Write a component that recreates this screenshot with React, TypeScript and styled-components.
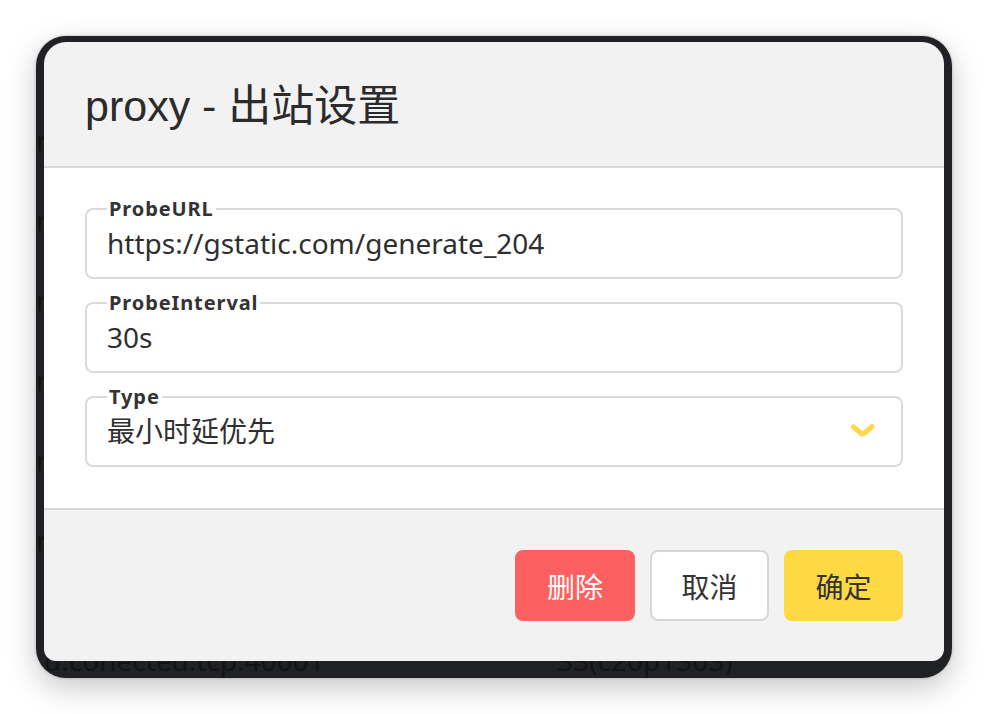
import styled, { createGlobalStyle } from 'styled-components'

const GlobalStyle = createGlobalStyle`
  html, body {
    margin: 0;
    background: #ffffff;
  }
  body {
    font-family: 'Noto Sans', 'Noto Sans CJK SC', sans-serif;
    color: #333;
  }
`

const Page = styled.div`
  width: 988px;
  height: 714px;
  box-sizing: border-box;
  padding: 36px;
`

const Window = styled.div`
  position: relative;
  width: 916px;
  height: 642px;
  border-radius: 30px;
  background: #202124;
  overflow: hidden;
  box-shadow: 0 10px 30px rgba(0, 0, 0, 0.22), 0 0 3px rgba(0, 0, 0, 0.25);
`

// connection list that sits behind the dialog
const BackList = styled.div`
  display: flex;
  flex-direction: column;
  padding-top: 64px;
  color: #121314;
  font-size: 28px;
`

const BackRow = styled.div<{ last?: boolean }>`
  display: grid;
  grid-template-columns: ${p => (p.last ? '513px' : '521px')} auto;
  align-items: center;
  height: ${p => (p.last ? '36px' : '80px')};
  margin-top: ${p => (p.last ? '62px' : '0')};
  padding-left: ${p => (p.last ? '8px' : '0')};
  line-height: 36px;
  white-space: nowrap;
`

const Modal = styled.div`
  position: absolute;
  left: 8px;
  top: 6px;
  width: 900px;
  height: 619px;
  display: flex;
  flex-direction: column;
  background: #f2f2f2;
  border-radius: 22px 22px 12px 12px;
  overflow: hidden;
`

const Header = styled.div`
  height: 126px;
  box-sizing: border-box;
  display: flex;
  align-items: center;
  padding: 4px 41px 0;
  border-bottom: 2px solid #d8d8d8;
`

const Title = styled.h1`
  margin: 0;
  font-family: 'Liberation Sans', 'Noto Sans CJK SC', sans-serif;
  font-size: 43px;
  font-weight: 400;
  line-height: 50px;
  color: #2b2b2b;
`

const Body = styled.div`
  display: flex;
  flex-direction: column;
  gap: 14px;
  padding: 31px 41px 41px;
  background: #ffffff;
  border-bottom: 2px solid #d8d8d8;
`

const Field = styled.fieldset`
  margin: 0;
  padding: 0 20px;
  min-width: 0;
  border: 2px solid #dadada;
  border-radius: 8px;
`

const Legend = styled.legend`
  padding: 0 2px;
  font-size: 20px;
  font-weight: 700;
  letter-spacing: 0.9px;
  line-height: 20px;
  color: #333;
`

const Row = styled.div`
  display: flex;
  align-items: center;
  justify-content: space-between;
  padding: 6px 0 16px;
`

const Value = styled.input`
  flex: 1;
  min-width: 0;
  height: 36px;
  padding: 0;
  border: none;
  outline: none;
  background: transparent;
  font-family: inherit;
  font-size: 28px;
  line-height: 36px;
  color: #2f2f2f;
`

const SelectText = styled.div`
  font-size: 28px;
  line-height: 36px;
  color: #2f2f2f;
`

const Chevron = styled.svg`
  width: 26px;
  height: 16px;
  margin-right: 5px;
`

const Footer = styled.div`
  flex: 1;
  display: flex;
  align-items: center;
  justify-content: flex-end;
  gap: 15px;
  padding: 0 41px;
`

const Button = styled.button<{ variant: 'danger' | 'plain' | 'primary' }>`
  width: ${p => (p.variant === 'danger' ? '120px' : '119px')};
  height: 71px;
  box-sizing: border-box;
  border-radius: 8px;
  font-family: inherit;
  font-size: 28px;
  cursor: pointer;
  border: 2px solid
    ${p => (p.variant === 'plain' ? '#d6d6d6' : p.variant === 'danger' ? '#fd6060' : '#ffd944')};
  background: ${p =>
    p.variant === 'danger' ? '#fd6060' : p.variant === 'primary' ? '#ffd944' : '#ffffff'};
  color: ${p => (p.variant === 'danger' ? '#ffffff' : '#333333')};
`

const rows = ['r', 'r', 'r', 'r', 'r', 'r']

export default function App() {
  return (
    <>
      <GlobalStyle />
      <Page>
        <Window>
          <BackList>
            {rows.map((t, i) => (
              <BackRow key={i}>
                <span>{t}d.conected.tcp:4060{i}</span>
                <span>33(c20p1303)</span>
              </BackRow>
            ))}
            <BackRow last>
              <span>d.conected.tcp:40601</span>
              <span>33(c20p1303)</span>
            </BackRow>
          </BackList>

          <Modal>
            <Header>
              <Title>proxy - 出站设置</Title>
            </Header>
            <Body>
              <Field>
                <Legend>ProbeURL</Legend>
                <Row>
                  <Value readOnly defaultValue="https://gstatic.com/generate_204" />
                </Row>
              </Field>
              <Field>
                <Legend>ProbeInterval</Legend>
                <Row>
                  <Value readOnly defaultValue="30s" />
                </Row>
              </Field>
              <Field>
                <Legend>Type</Legend>
                <Row>
                  <SelectText>最小时延优先</SelectText>
                  <Chevron viewBox="0 0 26 16">
                    <path d="M3.5 4 L12 11" stroke="#ffd84a" strokeWidth="5" strokeLinecap="round" fill="none" />
                    <path d="M14.5 10 L22 3.5" stroke="#ffd84a" strokeWidth="5" strokeLinecap="round" fill="none" />
                  </Chevron>
                </Row>
              </Field>
            </Body>
            <Footer>
              <Button variant="danger">删除</Button>
              <Button variant="plain">取消</Button>
              <Button variant="primary">确定</Button>
            </Footer>
          </Modal>
        </Window>
      </Page>
    </>
  )
}
